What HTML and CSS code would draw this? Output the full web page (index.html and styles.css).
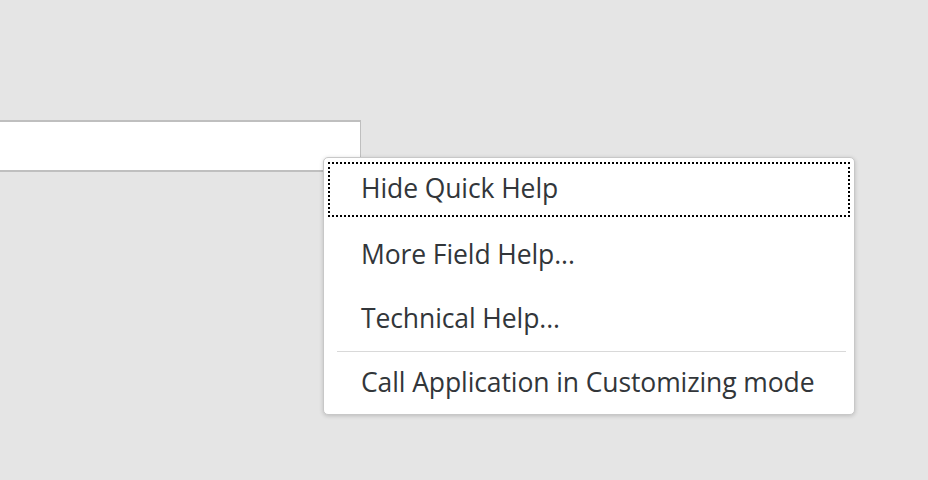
FILE: index.html
```html
<!DOCTYPE html>
<html lang="en">
<head>
    <meta charset="UTF-8">
    <meta name="viewport" content="width=device-width, initial-scale=1.0">
    <title>Quick Help</title>
    <link rel="stylesheet" href="styles.css">
</head>
<body>
    <main class="screen">
        <div class="field-row">
            <input class="field" type="text" aria-label="Field">
        </div>

        <ul class="context-menu" role="menu">
            <li class="menu-item focused" role="menuitem">Hide Quick Help</li>
            <li class="menu-item" role="menuitem">More Field Help...</li>
            <li class="menu-item" role="menuitem">Technical Help...</li>
            <li class="menu-separator" role="separator"></li>
            <li class="menu-item last" role="menuitem">Call Application in Customizing mode</li>
        </ul>
    </main>
</body>
</html>
```

FILE: styles.css
```css
/* Reset básico */
* {
    margin: 0;
    padding: 0;
    box-sizing: border-box;
}

body {
    font-family: "Open Sans", "Noto Sans", sans-serif;
    background: #e5e5e5;
    color: #32363a;
    width: 928px;
    height: 480px;
    overflow: hidden;
}

.screen {
    position: relative;
    height: 100%;
    padding-top: 120px;
}

.field-row {
    display: flex;
}

.field {
    width: 362px;
    height: 52px;
    margin-left: -1px;
    background: #fff;
    border: 1px solid #bfbfbf;
    border-top-width: 2px;
    border-bottom-width: 2px;
    outline: none;
}

/* Menu de contexto */
.context-menu {
    position: absolute;
    left: 323px;
    top: 157px;
    width: 532px;
    list-style: none;
    background: #fff;
    border: 1px solid #c8c8c8;
    border-radius: 5px;
    box-shadow: 0 1px 4px rgba(0, 0, 0, 0.18);
    padding-top: 1px;
}

.menu-item {
    display: flex;
    align-items: center;
    height: 64px;
    padding-left: 37px;
    padding-bottom: 2px;
    font-size: 26.5px;
    letter-spacing: -0.1px;
    white-space: nowrap;
}

.menu-item.focused {
    height: 64px;
    padding-bottom: 6px;
    position: relative;
}

.menu-item.focused::after {
    content: "";
    position: absolute;
    left: 4px;
    right: 4px;
    top: 3px;
    bottom: 6px;
    border: 2px dotted #000;
}

.menu-item.last {
    height: 62px;
    padding-bottom: 3px;
}

.menu-separator {
    height: 1px;
    margin: 0 8px 0 13px;
    background: #d9d9d9;
}
```
